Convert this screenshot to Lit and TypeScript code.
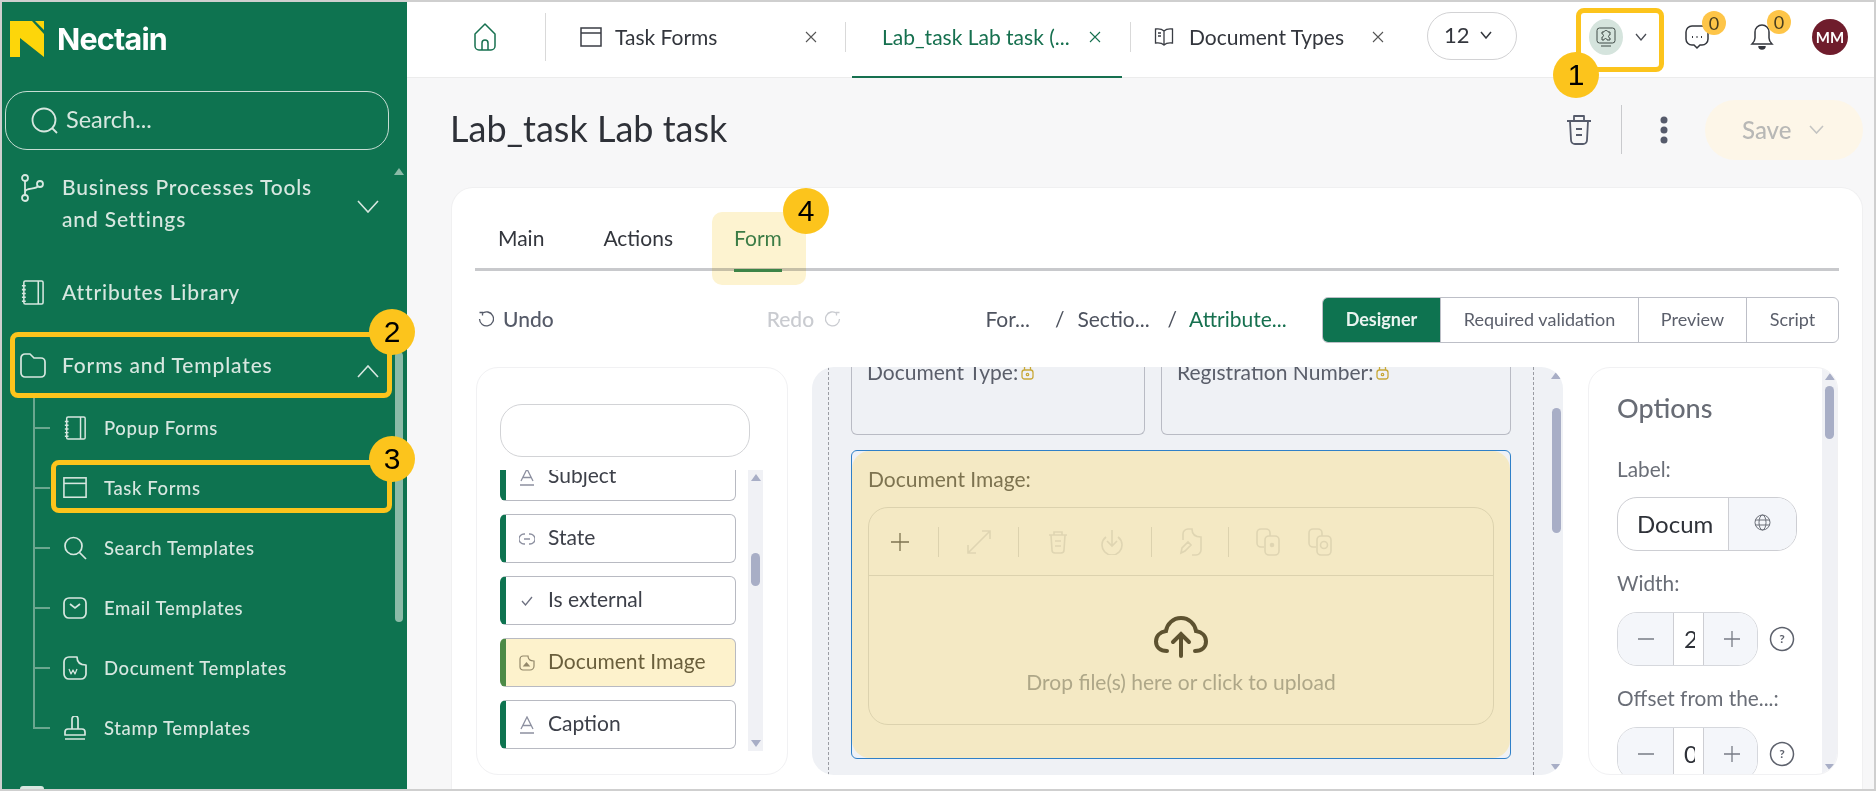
import { LitElement, html, css } from "lit";
import { customElement } from "lit/decorators.js";

const chev = (w: number, h: number, c: string, sw = 1.6) => html`<svg class="noshrink" width=${w} height=${h} viewBox="0 0 ${w} ${h}" fill="none" stroke=${c} stroke-width=${sw}><path d="M1 1 L${w / 2} ${h - 1} L${w - 1} 1"/></svg>`;
const x = (c: string) => html`<svg class="noshrink" width="12" height="12" viewBox="0 0 12 12" fill="none" stroke=${c} stroke-width="1.1"><path d="M1 1 L11 11 M11 1 L1 11"/></svg>`;

const notebook = (s: number) => html`<svg width=${s} height=${s} viewBox="0 0 24 26" fill="none" stroke="currentColor" stroke-width="1.6" stroke-linejoin="round"><rect x="3" y="1" width="20" height="24" rx="1.5"/><path d="M18 1v24M1 6h4M1 10h4M1 14h4M1 18h4M1 22h4"/></svg>`;

const childItems = [
  { t: "Popup Forms", i: notebook(24) },
  { t: "Task Forms", i: html`<svg width="26" height="24" viewBox="0 0 26 24" fill="none" stroke="currentColor" stroke-width="1.7"><rect x="1" y="1" width="24" height="21"/><path d="M1 7h24"/></svg>` },
  { t: "Search Templates", i: html`<svg width="24" height="24" viewBox="0 0 24 24" fill="none" stroke="currentColor" stroke-width="1.7"><circle cx="10.500" cy="10" r="8.500"/><path d="M16.500 16.500L23 23"/></svg>` },
  { t: "Email Templates", i: html`<svg width="24" height="22" viewBox="0 0 24 22" fill="none" stroke="currentColor" stroke-width="1.7"><rect x="1" y="1" width="22" height="20" rx="5"/><path d="M7 7l5 4 5-4"/></svg>` },
  { t: "Document Templates", i: html`<svg width="24" height="24" viewBox="0 0 24 24" fill="none" stroke="currentColor" stroke-width="1.7" stroke-linejoin="round"><path d="M6 1h8c0 5 3 8 9 8v9a5 5 0 0 1-5 5H6a5 5 0 0 1-5-5V6a5 5 0 0 1 5-5z"/><path d="M6 13l2 5 2-4 2 4 2-5" stroke-width="1.200"/></svg>` },
  { t: "Stamp Templates", i: html`<svg width="22" height="24" viewBox="0 0 22 24" fill="none" stroke="currentColor" stroke-width="1.7" stroke-linejoin="round"><path d="M8 13V3a3 3 0 0 1 6 0v10M1 19v-3a3 3 0 0 1 3-3h14a3 3 0 0 1 3 3v3zM1 23h20"/></svg>` },
];

const A = html`<svg width="16" height="18" viewBox="0 0 16 18" fill="none" stroke="#8d90a0" stroke-width="1.300"><path d="M2 13L8 1l6 12M4 9.500h8M1 17h14"/></svg>`;
const listItems = [
  { t: "Subject", i: A },
  { t: "State", i: html`<svg width="16" height="12" viewBox="0 0 16 12" fill="none" stroke="#8d90a0" stroke-width="1.300"><path d="M6 1H5a5 5 0 0 0 0 10h1M10 1h1a5 5 0 0 1 0 10h-1M5 6h6"/></svg>` },
  { t: "Is external", i: html`<svg width="12" height="10" viewBox="0 0 12 10" fill="none" stroke="#6d7080" stroke-width="1.300"><path d="M1 5l3.500 4L11 1"/></svg>` },
  { t: "Document Image", sel: true, i: html`<svg width="16" height="16" viewBox="0 0 16 16" fill="none" stroke="#93886a" stroke-width="1.200"><path d="M4 1h5c0 3 2 5 6 5v5a4 4 0 0 1-4 4H4a3 3 0 0 1-3-3V4a3 3 0 0 1 3-3z"/><path d="M5 11l2.500-3L10 11z" fill="#93886a"/></svg>` },
  { t: "Caption", i: A },
];

const tb = "#dfd5b2";
const toolIcons = {
  expand: html`<svg width="26" height="26" viewBox="0 0 26 26" fill="none" stroke=${tb} stroke-width="1.600"><path d="M2 24L24 2M16 2h8v8M2 16v8h8"/></svg>`,
  trash: html`<svg width="20" height="24" viewBox="0 0 20 24" fill="none" stroke=${tb} stroke-width="1.600"><path d="M1 5h18M6 5V2h8v3M3 5l1 15a3 3 0 0 0 3 3h6a3 3 0 0 0 3-3l1-15M7 11h6M7 16h6"/></svg>`,
  down: html`<svg width="24" height="26" viewBox="0 0 24 26" fill="none" stroke=${tb} stroke-width="1.600"><path d="M12 1v16M7 12l5 5 5-5M6 8a10 10 0 1 0 12 0"/></svg>`,
  file: html`<svg width="24" height="28" viewBox="0 0 24 28" fill="none" stroke=${tb} stroke-width="1.600"><path d="M5 12V6a5 5 0 0 1 5-5h4c0 5 3 8 9 8v13a5 5 0 0 1-5 5h-4M3 25l1-5 6-6 3 3-6 6z"/></svg>`,
  copy1: html`<svg width="24" height="28" viewBox="0 0 24 28" fill="none" stroke=${tb} stroke-width="1.600"><path d="M8 19H5a4 4 0 0 1-4-4V5a4 4 0 0 1 4-4h5a4 4 0 0 1 4 4v3"/><rect x="9" y="8" width="14" height="19" rx="4"/><circle cx="16" cy="17" r="1.500" fill=${tb}/></svg>`,
  copy2: html`<svg width="24" height="28" viewBox="0 0 24 28" fill="none" stroke=${tb} stroke-width="1.600"><path d="M8 19H5a4 4 0 0 1-4-4V5a4 4 0 0 1 4-4h5a4 4 0 0 1 4 4v3"/><rect x="9" y="8" width="14" height="19" rx="4"/><circle cx="16" cy="17" r="3.500"/></svg>`,
};

const lock = html`<svg width="13" height="16" viewBox="0 0 13 16" fill="none" stroke="#c9a93a" stroke-width="1.300"><rect x="1" y="6" width="11" height="9" rx="2.500"/><path d="M3.500 6V4a3 3 0 0 1 6 0v2"/><circle cx="6.500" cy="10.500" r="1.200"/></svg>`;
const help = html`<svg class="noshrink" width="26" height="26" viewBox="0 0 26 26" fill="none"><circle cx="13" cy="13" r="11.500" stroke="#5d616c" stroke-width="1.500"/></svg>`;

@customElement("app-root")
export class AppRoot extends LitElement {
  static styles = css`
    :host { display: block; width: 1876px; height: 791px; overflow: hidden; font-family: "Lato", "Liberation Sans", sans-serif; }
    * { box-sizing: border-box; }
    .noshrink { flex: none; }
    .page { position: relative; width: 1876px; height: 791px; padding: 2px; background: #cfcfcf; }
    .frame { display: flex; width: 100%; height: 100%; overflow: hidden; background: #f7f7f8; }

    .side { width: 405px; flex: none; background: #0e7350; display: flex; flex-direction: column; color: #d7e7e0; overflow: hidden; }
    .logo { height: 89px; flex: none; display: flex; align-items: flex-start; padding: 19px 0 0 8px; gap: 12px; }
    .logo-text { font-family: "Inter", "Liberation Sans", sans-serif; font-weight: 700; font-size: 30.500px; line-height: 36px; color: #fff; letter-spacing: -0.8px; }
    .search { flex: none; margin: 0 18px 0 3px; height: 59px; border: 1px solid #c5ddd3; border-radius: 22px; display: flex; align-items: center; padding: 0 0 3px 25px; gap: 8px; font-size: 23.500px; color: #d7e7e0; }
    .menu { position: relative; flex: 1; padding-top: 21px; }
    .row { display: flex; padding: 0 28px 0 18px; font-size: 21px; font-weight: 500; letter-spacing: 0.85px; line-height: 32px; margin-bottom: 41px; }
    .row .ico { width: 42px; flex: none; display: flex; }
    .row .lbl { flex: 1; }
    .row .chevron { align-self: center; display: flex; }
    .row.multi .chevron { margin-top: 7px; }
    .row.multi .ico { padding-top: 3px; }
    .row.one .ico { align-items: center; }
    .row.forms { margin-bottom: 17px; }
    .kids { position: relative; padding-left: 31px; height: 360px; }
    .kids::before { content: ""; position: absolute; left: 31px; top: -1px; height: 331px; width: 2px; background: #6aa78f; }
    .kid { position: relative; display: flex; align-items: center; height: 60px; padding-left: 30px; gap: 17px; font-size: 18.500px; font-weight: 500; letter-spacing: 0.6px; }
    .kid::before { content: ""; position: absolute; left: 0; top: 29px; width: 17px; height: 2px; background: #6aa78f; }
    .kid .ki { width: 24px; flex: none; display: flex; justify-content: center; }
    .more { margin: 28px 0 0 18px; width: 24px; height: 10px; background: #d7e7e0; border-radius: 3px; }
    .sb-up { position: absolute; left: 392px; top: 18px; width: 0; height: 0; border-left: 5px solid transparent; border-right: 5px solid transparent; border-bottom: 7px solid #8bbba8; }
    .sb-th { position: absolute; left: 393px; top: 202px; width: 8px; height: 270px; background: #8bbba8; border-radius: 4px; }

    .main { flex: 1; min-width: 0; display: flex; flex-direction: column; }
    .top { height: 76px; flex: none; background: #fff; border-bottom: 1px solid #ececec; display: flex; align-items: center; font-size: 21px; color: #33363d; }
    .home { width: 138px; padding: 0 0 6px 66px; display: flex; flex: none; }
    .vs { width: 1px; background: #d9d9d9; flex: none; margin-bottom: 6px; }
    .vs.tall { height: 48px; }
    .vs.sh { height: 30px; }
    .tab { display: flex; align-items: center; flex: none; height: 100%; position: relative; white-space: nowrap; padding-bottom: 6px; }
    .t1 { width: 299px; padding-left: 34px; }
    .t1 .name { margin-left: 13px; width: 190px; }
    .t2 { width: 284px; padding-left: 36px; color: #16704f; }
    .t2 .name { width: 207px; }
    .t2::after { content: ""; position: absolute; left: 6px; right: 8px; bottom: -1px; height: 2px; background: #16704f; }
    .t3 { width: 296px; padding-left: 23px; }
    .t3 .name { margin-left: 15px; width: 183px; }
    .sel { width: 90px; height: 48px; border: 1px solid #d2d2d4; border-radius: 24px; display: flex; align-items: center; padding: 0 0 2px 16px; gap: 10px; flex: none; margin-bottom: 8px; font-size: 22px; }
    .tools { display: flex; align-items: center; flex: none; height: 100%; padding-bottom: 6px; }
    .sw { width: 34px; height: 36px; border-radius: 50%; background: #d5e4dd; display: flex; align-items: center; justify-content: center; margin-left: 72px; }
    .swc { margin-left: 12px; display: flex; }
    .bubble { position: relative; display: flex; }
    .badge { position: absolute; width: 24px; height: 24px; border-radius: 50%; background: #fec548; font-size: 18px; color: #4a3f1f; display: flex; align-items: center; justify-content: center; left: 17px; top: -13px; }
    .av { width: 36px; height: 36px; border-radius: 50%; background: #6f1d2c; color: #fff; font-size: 15px; font-weight: 700; display: flex; align-items: center; justify-content: center; margin-left: 38px; }

    .head { height: 109px; flex: none; display: flex; align-items: center; padding: 0 11px 6px 43px; }
    .title { font-size: 36px; color: #2e3138; line-height: 40px; margin-right: auto; margin-top: -4px; }
    .head .dv { width: 1px; height: 49px; background: #c9cacd; margin: 0 38px 0 29px; }
    .save { width: 158px; height: 60px; border-radius: 30px; background: #fdf6e8; color: #b8b8b6; font-size: 24px; font-weight: 500; display: flex; align-items: center; padding-left: 37px; gap: 18px; margin-left: 37px; }

    .card { flex: 1; min-height: 0; margin: 0 11px 0 44px; background: #fff; border: 1px solid #f0f0f1; border-bottom: 0; border-radius: 22px 22px 0 0; padding: 0 23px 0 24px; }
    .tabs { position: relative; height: 83px; margin-left: -1px; border-bottom: 3px solid #c8c9cc; display: flex; align-items: flex-start; padding: 37px 0 0 23px; font-size: 21px; line-height: 26px; color: #33363d; }
    .tabs span { position: relative; }
    .m-main { margin-right: 59px; }
    .m-act { margin-right: 61px; }
    .m-form { color: #3c7c46; }
    .formhl { position: absolute; left: 237px; top: 24px; width: 94px; height: 73px; background: #fdf3d0; mix-blend-mode: multiply; border-radius: 10px; }
    .form-ul { position: absolute; left: 0; right: 0; top: 44px; height: 3px; background: #3d8447; }

    .bar { display: flex; align-items: center; height: 46px; margin: 26px 0 0 -1px; font-size: 21px; color: #555a68; }
    .undo { display: flex; align-items: center; gap: 9px; margin-left: 1px; font-weight: 500; width: 291px; padding: 0 0 4px 2px; }
    .redo { display: flex; align-items: center; gap: 11px; color: #c9cbd0; width: 219px; font-weight: 500; padding-bottom: 4px; }
    .crumbs { display: flex; align-items: center; width: 337px; font-size: 21px; color: #4e535f; white-space: pre; padding-bottom: 4px; }
    .crumbs .g { color: #16704f; }
    .seg { flex: none; width: 517px; height: 46px; border: 1px solid #bdbfc7; border-radius: 6px; display: flex; font-size: 18px; color: #5b5f6b; overflow: hidden; margin-left: auto; }
    .seg div { display: flex; align-items: center; justify-content: center; border-left: 1px solid #bdbfc7; flex: none; padding-bottom: 3px; }
    .seg .on { background: #0e7350; color: #e9f3ef; border: 0; width: 117px; font-weight: 700; }
    .seg .s2 { width: 198px; } .seg .s3 { width: 108px; } .seg .s4 { width: 92px; }

    .panels { display: flex; gap: 24px; margin-top: 24px; height: 408px; }
    .pn { border: 1px solid #f1f1f3; border-radius: 22px; background: #fff; overflow: hidden; flex: none; position: relative; }
    .left { width: 312px; padding: 36px 0 0 23px; }
    .inp { width: 250px; height: 53px; border: 1px solid #d2d3d6; border-radius: 22px; }
    .lw { display: flex; margin-top: 13px; height: 281px; gap: 12px; }
    .lst { width: 236px; overflow: hidden; flex: none; }
    .lsti { margin-top: -18px; display: flex; flex-direction: column; gap: 13px; }
    .it { height: 49px; flex: none; border: 1px solid #b8bac2; border-left: 6px solid #0e7350; border-radius: 6px; display: flex; align-items: center; padding: 0 0 5px 13px; font-size: 21px; color: #3d4049; background: #fff; }
    .it .ii { width: 16px; display: flex; justify-content: center; margin: 5px 13px 0 0; flex: none; }
    .it.sel2 { background: #fdf2cc; color: #6a5f3c; border-left-color: #4c8a47; }
    .sb { width: 15px; flex: none; background: #f0f1f5; position: relative; display: flex; flex-direction: column; align-items: center; justify-content: space-between; padding: 4px 0; }
    .up { width: 0; height: 0; border-left: 5px solid transparent; border-right: 5px solid transparent; border-bottom: 7px solid #a8aec6; }
    .dn { width: 0; height: 0; border-left: 5px solid transparent; border-right: 5px solid transparent; border-top: 7px solid #a8aec6; }
    .th { position: absolute; left: 3px; width: 9px; background: #a8aec6; border-radius: 5px; }

    .mid { width: 751px; background: #eff1f5; border: 0; display: flex; }
    .canvas { margin-left: 16px; width: 706px; height: 100%; flex: none; border-left: 1px dashed #9a9ca3; border-right: 1px dashed #9a9ca3; padding: 0 22px; overflow: hidden; }
    .tf { display: flex; gap: 16px; }
    .fc { height: 68px; border: 1px solid #b9bbc4; border-top: 0; border-radius: 0 0 6px 6px; padding-left: 15px; font-size: 21px; color: #5a5e6a; line-height: 24px; overflow: hidden; white-space: nowrap; }
    .fc .in { margin-top: -7px; display: flex; align-items: center; gap: 3px; }
    .fc.a { width: 294px; } .fc.b { width: 350px; }
    .fs { margin-top: 15px; height: 309px; width: 660px; border: 1px solid #2f80c8; border-radius: 6px; padding: 0; overflow: hidden; }
    .fsi { height: 100%; background: #f4e9c4; border-radius: 18px; padding: 15px 16px 0 16px; color: #7d7350; font-size: 21px; line-height: 26px; }
    .dz { margin-top: 15px; height: 218px; border: 1px solid #dcd2ae; border-radius: 20px; display: flex; flex-direction: column; align-items: stretch; }
    .dzt { height: 68px; border-bottom: 1px solid #dcd2ae; display: flex; align-items: center; padding-left: 21px; flex: none; }
    .dzt svg { flex: none; }
    .dzs { width: 1px; height: 30px; background: #dcd2ae; flex: none; }
    .dzb { flex: 1; display: flex; flex-direction: column; align-items: center; padding-top: 40px; color: #aea788; font-size: 21px; }
    .dzb span { margin-top: 11px; }
    .sb2 { width: 14px; margin-left: 15px; background: transparent; position: relative; display: flex; flex-direction: column; align-items: center; justify-content: space-between; padding: 5px 0 4px; flex: none; }

    .right { width: 250px; margin-left: 1px; display: flex; }
    .opt { flex: 1; padding: 24px 0 0 28px; overflow: hidden; color: #6a6e77; font-size: 20.800px; line-height: 24px; }
    .opt h3 { margin: 0; font-size: 27px; line-height: 32px; font-weight: 500; color: #686c75; }
    .opt .l { margin-top: 33px; }
    .opt .l2 { margin-top: 20px; }
    .fld { display: flex; margin-top: 16px; width: 180px; height: 54px; border: 1px solid #cdced3; border-radius: 20px; overflow: hidden; }
    .fld .v { width: 111px; display: flex; align-items: center; padding-left: 19px; font-size: 24px; color: #2e3138; border-right: 1px solid #cdced3; flex: none; }
    .fld .g { flex: 1; background: #f4f6fa; display: flex; align-items: center; justify-content: center; padding-bottom: 4px; }
    .stw { display: flex; align-items: center; gap: 11px; margin-top: 17px; }
    .st { display: flex; width: 141px; height: 54px; border: 1px solid #d6d8dd; border-radius: 20px; overflow: hidden; flex: none; font-size: 24px; color: #2e3138; }
    .st .b { width: 55px; background: #f4f6fa; display: flex; align-items: center; justify-content: center; flex: none; }
    .st .n { width: 31px; border-left: 1px solid #cdced3; border-right: 1px solid #cdced3; display: flex; align-items: center; padding-left: 10px; flex: none; }
    .st .n span { width: 11px; overflow: hidden; }
    .hp { position: relative; display: flex; flex: none; }
    .hp b { position: absolute; inset: 0; display: flex; align-items: center; justify-content: center; font-size: 12px; color: #5d616c; font-weight: 700; }
    .sb3 { width: 15px; flex: none; background: #f0f1f5; position: relative; display: flex; flex-direction: column; align-items: center; justify-content: space-between; padding: 5px 0 3px; }

    .hl { position: absolute; border: 5px solid #fcc41c; border-radius: 8px; pointer-events: none; }
    .num { position: absolute; width: 46px; height: 46px; border-radius: 50%; background: #fcc41c; color: #000; font-family: "Liberation Sans", sans-serif; font-size: 30px; display: flex; align-items: center; justify-content: center; }
    .h1 { left: 1576px; top: 8px; width: 88px; height: 64px; }
    .h2 { left: 10px; top: 332px; width: 382px; height: 66px; }
    .h3 { left: 51px; top: 460px; width: 341px; height: 53px; }
    .n1 { left: 1553px; top: 52px; }
    .n2 { left: 369px; top: 309px; }
    .n3 { left: 369px; top: 436px; }
    .n4 { left: 783px; top: 188px; }
  `;

  render() {
    const g = "#d7e7e0";
    return html`<div class="page">
      <div class="frame">
        <aside class="side">
          <div class="logo">
            <svg width="35" height="37" viewBox="0 0 35 37" fill="#fdd60a"><polygon points="0,0 22,0 34,13 34,36 10,17 10,36 0,36"/><polygon points="25,0 34,0 34,9"/></svg>
            <span class="logo-text">Nectain</span>
          </div>
          <div class="search">
            <svg width="27" height="27" viewBox="0 0 27 27" fill="none" stroke=${g} stroke-width="1.800" style="margin-top:3px"><circle cx="13" cy="13" r="11.500"/><path d="M21 21l5 5"/></svg>
            Search...
          </div>
          <div class="menu">
            <div class="row multi">
              <span class="ico"><svg width="24" height="28" viewBox="0 0 24 28" fill="none" stroke=${g} stroke-width="1.800"><circle cx="5" cy="4" r="3"/><circle cx="5" cy="24" r="3"/><circle cx="20" cy="10" r="3"/><path d="M5 7v14M5 18c0-5 11-2 13-6"/></svg></span>
              <span class="lbl">Business Processes Tools<br />and Settings</span>
              <span class="chevron">${chev(22, 13, g)}</span>
            </div>
            <div class="row one"><span class="ico">${notebook(25)}</span><span class="lbl">Attributes Library</span></div>
            <div class="row one forms">
              <span class="ico"><svg width="26" height="25" viewBox="0 0 26 25" fill="none" stroke=${g} stroke-width="1.700" stroke-linejoin="round"><path d="M1 5a4 4 0 0 1 4-4h5l4 4h7a4 4 0 0 1 4 4v11a4 4 0 0 1-4 4H5a4 4 0 0 1-4-4z"/></svg></span>
              <span class="lbl">Forms and Templates</span>
              <span class="chevron" style="transform:translateY(6px) scaleY(-1)">${chev(22, 13, g)}</span>
            </div>
            <div class="kids">
              ${childItems.map((c) => html`<div class="kid"><span class="ki">${c.i}</span><span>${c.t}</span></div>`)}
            </div>
            <div class="more"></div>
            <div class="sb-up"></div>
            <div class="sb-th"></div>
          </div>
        </aside>
        <main class="main">
          <header class="top">
            <div class="home"><svg width="24" height="28" viewBox="0 0 24 28" fill="none" stroke="#16704f" stroke-width="1.500" stroke-linejoin="round"><path d="M2 11L12 1l10 10v12a4 4 0 0 1-4 4H6a4 4 0 0 1-4-4z"/><path d="M9 27v-7a3 3 0 0 1 6 0v7"/></svg></div>
            <span class="vs tall"></span>
            <div class="tab t1">
              <svg width="22" height="20" viewBox="0 0 22 20" fill="none" stroke="#3a3d44" stroke-width="1.500"><rect x="1" y="1" width="20" height="18"/><path d="M1 6h20"/></svg>
              <span class="name">Task Forms</span>${x("#555")}
            </div>
            <span class="vs sh"></span>
            <div class="tab t2"><span class="name">Lab_task Lab task (...</span>${x("#16704f")}</div>
            <span class="vs sh"></span>
            <div class="tab t3">
              <svg width="20" height="20" viewBox="0 0 20 20" fill="none" stroke="#3a3d44" stroke-width="1.300"><path d="M10 4C8 2 5 1.500 1.500 2v14c3.500-.5 6.500 0 8.500 2 2-2 5-2.500 8.500-2V2C15 1.500 12 2 10 4zM10 4v14M4 6h3M4 9h3"/></svg>
              <span class="name">Document Types</span>${x("#555")}
            </div>
            <div class="sel"><span>12</span>${chev(12, 8, "#33363d", 1.500)}</div>
            <div class="tools">
              <span class="sw"><svg width="20" height="20" viewBox="0 0 20 20" fill="none" stroke="#3f4a46" stroke-width="1"><rect x="1" y="1" width="18" height="15" rx="2.500"/><path d="M5 19h10M8 5c0-2 4-2 4 0h2v3c-2 0-2 3 0 3v2h-3c0-2-3-2-3 0H6v-3c2 0 2-3 0-3V5z"/></svg></span>
              <span class="swc">${chev(12, 8, "#4a4d55", 1.300)}</span>
              <span class="bubble" style="margin-left:38px"><svg width="24" height="26" viewBox="0 0 24 26" fill="none" stroke="#33363d" stroke-width="1.500"><path d="M7 2h10a6 6 0 0 1 6 6v7a6 6 0 0 1-6 6h-2l-3 3-3-3H7a6 6 0 0 1-6-6V8a6 6 0 0 1 6-6z"/><path d="M7 13h1M11.500 13h1M16 13h1" stroke-width="2"/></svg><span class="badge">0</span></span>
              <span class="bubble" style="margin-left:41px"><svg width="24" height="28" viewBox="0 0 24 28" fill="none" stroke="#33363d" stroke-width="1.500"><path d="M12 2a7 7 0 0 0-7 7v6c0 3-2 5-3 6h20c-1-1-3-3-3-6V9a7 7 0 0 0-7-7z"/><path d="M9 23a3 3 0 0 0 6 0" fill="#33363d"/></svg><span class="badge">0</span></span>
              <span class="av">MM</span>
            </div>
          </header>
          <div class="head">
            <div class="title">Lab_task Lab task</div>
            <svg width="26" height="32" viewBox="0 0 26 32" fill="none" stroke="#565b6b" stroke-width="1.800" stroke-linejoin="round"><path d="M1 7h24M8 7V2h10v5M4 7l1 19a4 4 0 0 0 4 4h8a4 4 0 0 0 4-4l1-19M10 15h6M10 21h6"/></svg>
            <span class="dv"></span>
            <svg width="8" height="28" viewBox="0 0 8 28" fill="#565b6b"><circle cx="4" cy="4" r="3.500"/><circle cx="4" cy="14" r="3.500"/><circle cx="4" cy="24" r="3.500"/></svg>
            <div class="save"><span>Save</span>${chev(15, 9, "#c4c4c2", 1.600)}</div>
          </div>
          <section class="card">
            <div class="tabs">
              <div class="formhl"></div>
              <span class="m-main">Main</span>
              <span class="m-act">Actions</span>
              <span class="m-form">Form<i class="form-ul"></i></span>
            </div>
            <div class="bar">
              <div class="undo"><svg width="16" height="17" viewBox="0 0 16 17" fill="none" stroke="#555a68" stroke-width="1.300"><path d="M4 3.500A7 7 0 1 1 1.500 9M1.500 2.500h3v3"/></svg>Undo</div>
              <div class="redo">Redo<svg width="16" height="17" viewBox="0 0 16 17" fill="none" stroke="#c9cbd0" stroke-width="1.300"><path d="M12 3.500A7 7 0 1 0 14.500 9M14.500 2.500h-3v3"/></svg></div>
              <div class="crumbs"><span>For...</span><span style="margin:0 13px 0 25px">/</span><span>Sectio...</span><span style="margin:0 12px 0 18px">/</span><span class="g">Attribute...</span></div>
              <div class="seg"><div class="on">Designer</div><div class="s2">Required validation</div><div class="s3">Preview</div><div class="s4">Script</div></div>
            </div>
            <div class="panels">
              <div class="pn left">
                <div class="inp"></div>
                <div class="lw">
                  <div class="lst"><div class="lsti">
                    ${listItems.map((i) => html`<div class="it ${i.sel ? "sel2" : ""}"><span class="ii">${i.i}</span>${i.t}</div>`)}
                  </div></div>
                  <div class="sb"><i class="up"></i><i class="th" style="top:83px;height:33px"></i><i class="dn"></i></div>
                </div>
              </div>
              <div class="pn mid">
                <div class="canvas">
                  <div class="tf">
                    <div class="fc a"><div class="in">Document Type:${lock}</div></div>
                    <div class="fc b"><div class="in">Registration Number:${lock}</div></div>
                  </div>
                  <div class="fs"><div class="fsi">
                    Document Image:
                    <div class="dz">
                      <div class="dzt">
                        <svg width="20" height="20" viewBox="0 0 20 20" stroke="#7d7350" stroke-width="1.300"><path d="M10 1v18M1 10h18"/></svg>
                        <span class="dzs" style="margin-left:28px"></span>
                        <span style="margin-left:27px;display:flex">${toolIcons.expand}</span>
                        <span class="dzs" style="margin-left:26px"></span>
                        <span style="margin-left:29px;display:flex">${toolIcons.trash}</span>
                        <span style="margin-left:32px;display:flex">${toolIcons.down}</span>
                        <span class="dzs" style="margin-left:27px"></span>
                        <span style="margin-left:26px;display:flex">${toolIcons.file}</span>
                        <span class="dzs" style="margin-left:26px"></span>
                        <span style="margin-left:27px;display:flex">${toolIcons.copy1}</span>
                        <span style="margin-left:28px;display:flex">${toolIcons.copy2}</span>
                      </div>
                      <div class="dzb">
                        <svg width="54" height="42" viewBox="0 0 54 42" fill="none" stroke="#5d5230" stroke-width="4" stroke-linecap="round"><path d="M13 35C6 35 2 31 2 25.500 2 20 6 16 12 15 13 8 19 2 27 2s14 6 15 13c6 1 10 5 10 10.500S48 35 41 35"/><path d="M27 40V18M19 26l8-8 8 8"/></svg>
                        <span>Drop file(s) here or click to upload</span>
                      </div>
                    </div>
                  </div></div>
                </div>
                <div class="sb2"><i class="up"></i><i class="th" style="top:41px;height:125px;left:3px"></i><i class="dn"></i></div>
              </div>
              <div class="pn right">
                <div class="opt">
                  <h3>Options</h3>
                  <div class="l">Label:</div>
                  <div class="fld"><div class="v">Docum</div><div class="g"><svg width="17" height="17" viewBox="0 0 17 17" fill="none" stroke="#6a6e77" stroke-width="1"><circle cx="8.500" cy="8.500" r="7.500"/><ellipse cx="8.500" cy="8.500" rx="3.500" ry="7.500"/><path d="M1 6h15M1 11h15"/></svg></div></div>
                  <div class="l2">Width:</div>
                  <div class="stw"><div class="st"><div class="b"><svg width="16" height="2"><path d="M0 1h16" stroke="#777b85" stroke-width="1.300"/></svg></div><div class="n"><span>2</span></div><div class="b"><svg width="16" height="16"><path d="M0 8h16M8 0v16" stroke="#777b85" stroke-width="1.300"/></svg></div></div><span class="hp">${help}<b>?</b></span></div>
                  <div class="l2">Offset from the...:</div>
                  <div class="stw"><div class="st"><div class="b"><svg width="16" height="2"><path d="M0 1h16" stroke="#777b85" stroke-width="1.300"/></svg></div><div class="n"><span>0</span></div><div class="b"><svg width="16" height="16"><path d="M0 8h16M8 0v16" stroke="#777b85" stroke-width="1.300"/></svg></div></div><span class="hp">${help}<b>?</b></span></div>
                </div>
                <div class="sb3"><i class="up"></i><i class="th" style="top:18px;height:53px"></i><i class="dn"></i></div>
              </div>
            </div>
          </section>
        </main>
      </div>
      <div class="hl h1"></div><div class="hl h2"></div><div class="hl h3"></div>
      <div class="num n1">1</div><div class="num n2">2</div><div class="num n3">3</div><div class="num n4">4</div>
    </div>`;
  }
}
